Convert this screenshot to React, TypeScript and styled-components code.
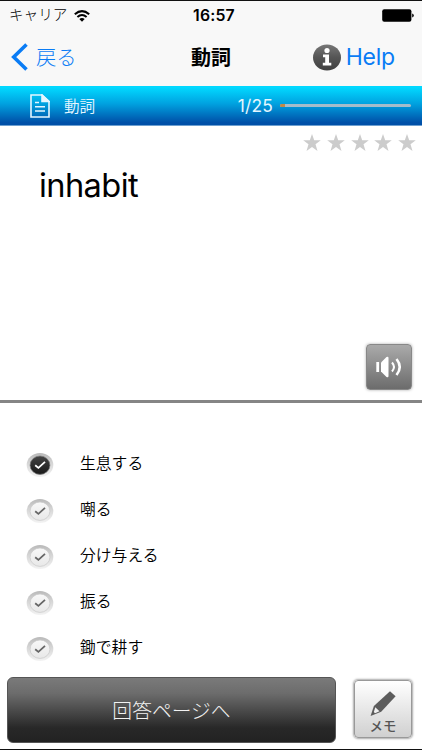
import { useState } from 'react';
import styled, { createGlobalStyle } from 'styled-components';

const GlobalStyle = createGlobalStyle`
  * {
    box-sizing: border-box;
  }

  body {
    margin: 0;
    background: #fff;
    font-family: Inter, 'Noto Sans CJK JP', sans-serif;
  }

  button {
    font-family: inherit;
    border: none;
    background: none;
    padding: 0;
  }
`;

const Container = styled.div`
  width: 422px;
  height: 750px;
  display: flex;
  flex-direction: column;
  overflow: hidden;
  background: #fff;
  color: #000;
  border-top: 1px solid #111;
  border-bottom: 1px solid #111;
`;

const StatusBar = styled.div`
  display: grid;
  grid-template-columns: 1fr auto 1fr;
  align-items: center;
  flex: none;
  height: 27px;
  padding: 0 8px 0 9px;
  background: #f8f8f8;
`;

const Carrier = styled.div`
  display: flex;
  align-items: center;
  gap: 7px;
  padding-top: 1px;
  font-size: 14.6px;
  font-weight: 300;
  line-height: 27px;
`;

const Clock = styled.div`
  padding: 1px 0 0 5px;
  font-size: 15.8px;
  font-weight: 600;
  letter-spacing: 0.2px;
`;

const Battery = styled.svg`
  justify-self: end;
`;

const NavBar = styled.div`
  display: grid;
  grid-template-columns: 1fr auto 1fr;
  align-items: center;
  flex: none;
  height: 58px;
  padding: 0 27px 0 11px;
  background: #f8f8f8;
`;

const NavButton = styled.button<{ $end?: boolean }>`
  display: flex;
  align-items: center;
  justify-self: ${({ $end }) => ($end ? 'end' : 'start')};
  gap: ${({ $end }) => ($end ? '5px' : '8px')};
  color: #0a7cf5;
  font-size: ${({ $end }) => ($end ? '23px' : '20.3px')};
  font-weight: ${({ $end }) => ($end ? 400 : 300)};
  letter-spacing: ${({ $end }) => ($end ? '-0.2px' : '0')};
`;

const BackLabel = styled.span`
  padding-bottom: 3px;
`;

const Title = styled.div`
  font-size: 20px;
  font-weight: 700;
  padding: 0 0 2px 16px;
`;

const ProgressHeader = styled.div`
  display: flex;
  align-items: center;
  flex: none;
  height: 40px;
  padding: 0 11px 0 30px;
  color: #e4f6ff;
  background: linear-gradient(#02d8ff 4%, #00a2e0 45%, #0050a8 94%);
  border-bottom: 1px solid #6d9fd0;
`;

const Category = styled.div`
  flex: 1;
  padding: 0 0 1px 14px;
  font-size: 15.6px;
  font-weight: 350;
`;

const Count = styled.div`
  font-size: 17.4px;
  letter-spacing: 0.2px;
`;

const Track = styled.div`
  width: 131px;
  height: 3px;
  margin-left: 7px;
  border-radius: 2px;
  background: #a3bccb;
  overflow: hidden;
`;

const TrackFill = styled.div`
  height: 100%;
  background: #c08a48;
`;

const WordPanel = styled.div`
  display: flex;
  flex-direction: column;
  flex: none;
  height: 277px;
  border-bottom: 3px solid #858585;
`;

const Stars = styled.div`
  display: flex;
  justify-content: flex-end;
  gap: 5.7px;
  padding: 8px 6px 0 0;
`;

const Word = styled.div`
  flex: 1;
  padding: 13px 0 0 39px;
  font-size: 32.6px;
  line-height: 40px;
  letter-spacing: -0.6px;
`;

const SpeakerButton = styled.button`
  align-self: flex-end;
  display: flex;
  align-items: center;
  justify-content: center;
  width: 46px;
  height: 46px;
  margin: 0 10px 10px 0;
  border: 1px solid #888;
  border-radius: 4px;
  background: linear-gradient(#aaa, #6c6c6c);
  box-shadow: 0 0 3px #aaa;
`;

const Options = styled.div`
  flex: 1;
  min-height: 0;
  display: flex;
  flex-direction: column;
  padding: 39px 0 0 26px;
`;

const Option = styled.button`
  display: flex;
  align-items: center;
  flex: none;
  gap: 26px;
  height: 46px;
  color: #000;
`;

const OptionLabel = styled.span`
  font-size: 15.8px;
  font-weight: 350;
  line-height: 24px;
  padding-bottom: 3px;
`;

const Footer = styled.div`
  display: flex;
  justify-content: space-between;
  align-items: center;
  flex: none;
  height: 79px;
  padding: 1px 10px 0 7px;
`;

const AnswerButton = styled.button`
  width: 329px;
  height: 66px;
  padding-bottom: 1px;
  border-radius: 6px;
  border: 1px solid #555;
  color: #f2f2f2;
  font-size: 19.8px;
  font-weight: 300;
  background: linear-gradient(#7a7a7a, #6c6c6c 24%, #282828 78%, #222);
`;

const MemoButton = styled.button`
  display: flex;
  flex-direction: column;
  align-items: center;
  justify-content: flex-end;
  width: 58px;
  height: 58px;
  margin-bottom: 2px;
  padding-bottom: 2px;
  border: 1px solid #999;
  border-radius: 4px;
  color: #555;
  font-size: 13.4px;
  font-weight: 500;
  line-height: 18px;
  background: linear-gradient(#fff, #d0d0d0);
  box-shadow: 0 0 2px 1px #aaa;
`;

const WifiIcon = () => (
  <svg width="16" height="12" viewBox="0 0 16 12" fill="none" stroke="#000" strokeWidth="2">
    <path d="M.8 4.3Q8-2 15.2 4.3M3.4 7Q8 3 12.6 7" />
    <path d="M8 11.7 5.3 9Q8 7 10.7 9Z" fill="#000" stroke="none" />
  </svg>
);

const BatteryIcon = () => (
  <Battery width="32" height="13" viewBox="0 0 32 13">
    <rect x=".2" y=".2" width="29.2" height="12.6" rx="2" fill="#000" />
    <path d="M30.2 4.5Q31.8 5 31.8 6.5T30.2 8.5Z" fill="#000" />
  </Battery>
);

const InfoIcon = () => (
  <svg width="28" height="27" viewBox="0 0 28 27">
    <defs>
      <linearGradient id="info" x2="0" y2="1">
        <stop stopColor="#777" />
        <stop offset=".5" stopColor="#555" />
        <stop offset="1" stopColor="#404040" />
      </linearGradient>
    </defs>
    <ellipse cx="14" cy="13.5" rx="14" ry="13" fill="url(#info)" />
    <circle cx="14" cy="6.5" r="2.6" fill="#fff" />
    <path d="M10 10.5h6v8.3h2.3v2.7H9.8v-2.7h2.4v-5.6H10Z" fill="#fff" />
  </svg>
);

const DocumentIcon = () => (
  <svg width="20" height="24" viewBox="0 0 20 24" fill="none" stroke="#e4f6ff" strokeWidth="1.6">
    <path d="M1 1h11l7 6.5V23H1Z" />
    <path d="M12 1v6.5h7Z" fill="#e4f6ff" />
    <path d="M5 8.5h4M5 12.7h10M5 17h10" />
  </svg>
);

const StarIcon = () => (
  <svg width="18" height="18" viewBox="0 0 18 18" fill="#ccc">
    <path d="m9 0 2.2 6.3h6.6l-5.3 4 2 6.6L9 13l-5.5 3.9 2-6.6-5.3-4h6.6Z" />
  </svg>
);

const SpeakerIcon = () => (
  <svg width="26" height="24" viewBox="0 0 26 24" fill="none" stroke="#fff">
    <path d="M.3 7h2.8v10H.3Z" fill="#fff" stroke="none" />
    <path d="M5 7.5 10.5 2q2-1 2 1v18q0 2-2 1L5 16.5Z" fill="#fff" stroke="none" />
    <path d="M16 7.5q4 4.5 0 9" strokeWidth="2" />
    <path d="M20.5 4q6.5 8 0 16" strokeWidth="2.6" />
  </svg>
);

const CheckIcon = ({ checked }: { checked: boolean }) => (
  <svg width="28" height="26" viewBox="0 0 28 26">
    <defs>
      <linearGradient id="ring" x2="0" y2="1">
        <stop stopColor="#b9b9b9" />
        <stop offset=".5" stopColor="#dadada" />
        <stop offset="1" stopColor="#f3f3f3" />
      </linearGradient>
      <linearGradient id="face" x2="0" y2="1">
        <stop stopColor="#f8f8f8" />
        <stop offset="1" stopColor="#e8e8e8" />
      </linearGradient>
      <linearGradient id="darkFace" x2="0" y2="1">
        <stop stopColor="#444" />
        <stop offset="1" stopColor="#191919" />
      </linearGradient>
    </defs>
    <ellipse cx="14" cy="13" rx="13.3" ry="12" fill="url(#ring)" />
    <ellipse
      cx="14"
      cy="13.2"
      rx="9.9"
      ry="9.2"
      fill={checked ? 'url(#darkFace)' : 'url(#face)'}
      stroke={checked ? '#777' : '#c8c8c8'}
      strokeWidth=".7"
    />
    <path
      d="m9.2 13.2 3.2 2.7 6.6-6"
      fill="none"
      stroke={checked ? '#fff' : '#666'}
      strokeWidth="1.8"
    />
  </svg>
);

const PencilIcon = () => (
  <svg width="26" height="26" viewBox="0 0 26 26" fill="#5c5c5c">
    <path d="m20 .2 5.6 5.1L11.2 20.7.6 25l3.3-10Z" />
    <path d="m5.3 16.3 4.2 4-4.5 2-1.2-1.2Z" fill="#f0f0f0" />
  </svg>
);

const choices = ['生息する', '嘲る', '分け与える', '振る', '鋤で耕す'];
const current = 1;
const total = 25;

const App: React.FC = () => {
  const [selected, setSelected] = useState(0);

  return (
    <>
      <GlobalStyle />
      <Container>
        <StatusBar>
          <Carrier>
            キャリア
            <WifiIcon />
          </Carrier>
          <Clock>16:57</Clock>
          <BatteryIcon />
        </StatusBar>
        <NavBar>
          <NavButton>
            <svg width="17" height="28" viewBox="0 0 17 28" fill="none" stroke="#0a7cf5" strokeWidth="3.6">
              <path d="M15.5 1.5 2.7 14l12.8 12.5" />
            </svg>
            <BackLabel>戻る</BackLabel>
          </NavButton>
          <Title>動詞</Title>
          <NavButton $end>
            <InfoIcon />
            Help
          </NavButton>
        </NavBar>
        <ProgressHeader>
          <DocumentIcon />
          <Category>動詞</Category>
          <Count>
            {current}/{total}
          </Count>
          <Track>
            <TrackFill style={{ width: `${(current / total) * 100}%` }} />
          </Track>
        </ProgressHeader>
        <WordPanel>
          <Stars>
            {[1, 2, 3, 4, 5].map((n) => (
              <StarIcon key={n} />
            ))}
          </Stars>
          <Word>inhabit</Word>
          <SpeakerButton aria-label="音声">
            <SpeakerIcon />
          </SpeakerButton>
        </WordPanel>
        <Options>
          {choices.map((choice, index) => (
            <Option key={choice} onClick={() => setSelected(index)}>
              <CheckIcon checked={selected === index} />
              <OptionLabel>{choice}</OptionLabel>
            </Option>
          ))}
        </Options>
        <Footer>
          <AnswerButton>回答ページへ</AnswerButton>
          <MemoButton>
            <PencilIcon />
            メモ
          </MemoButton>
        </Footer>
      </Container>
    </>
  );
};

export default App;
